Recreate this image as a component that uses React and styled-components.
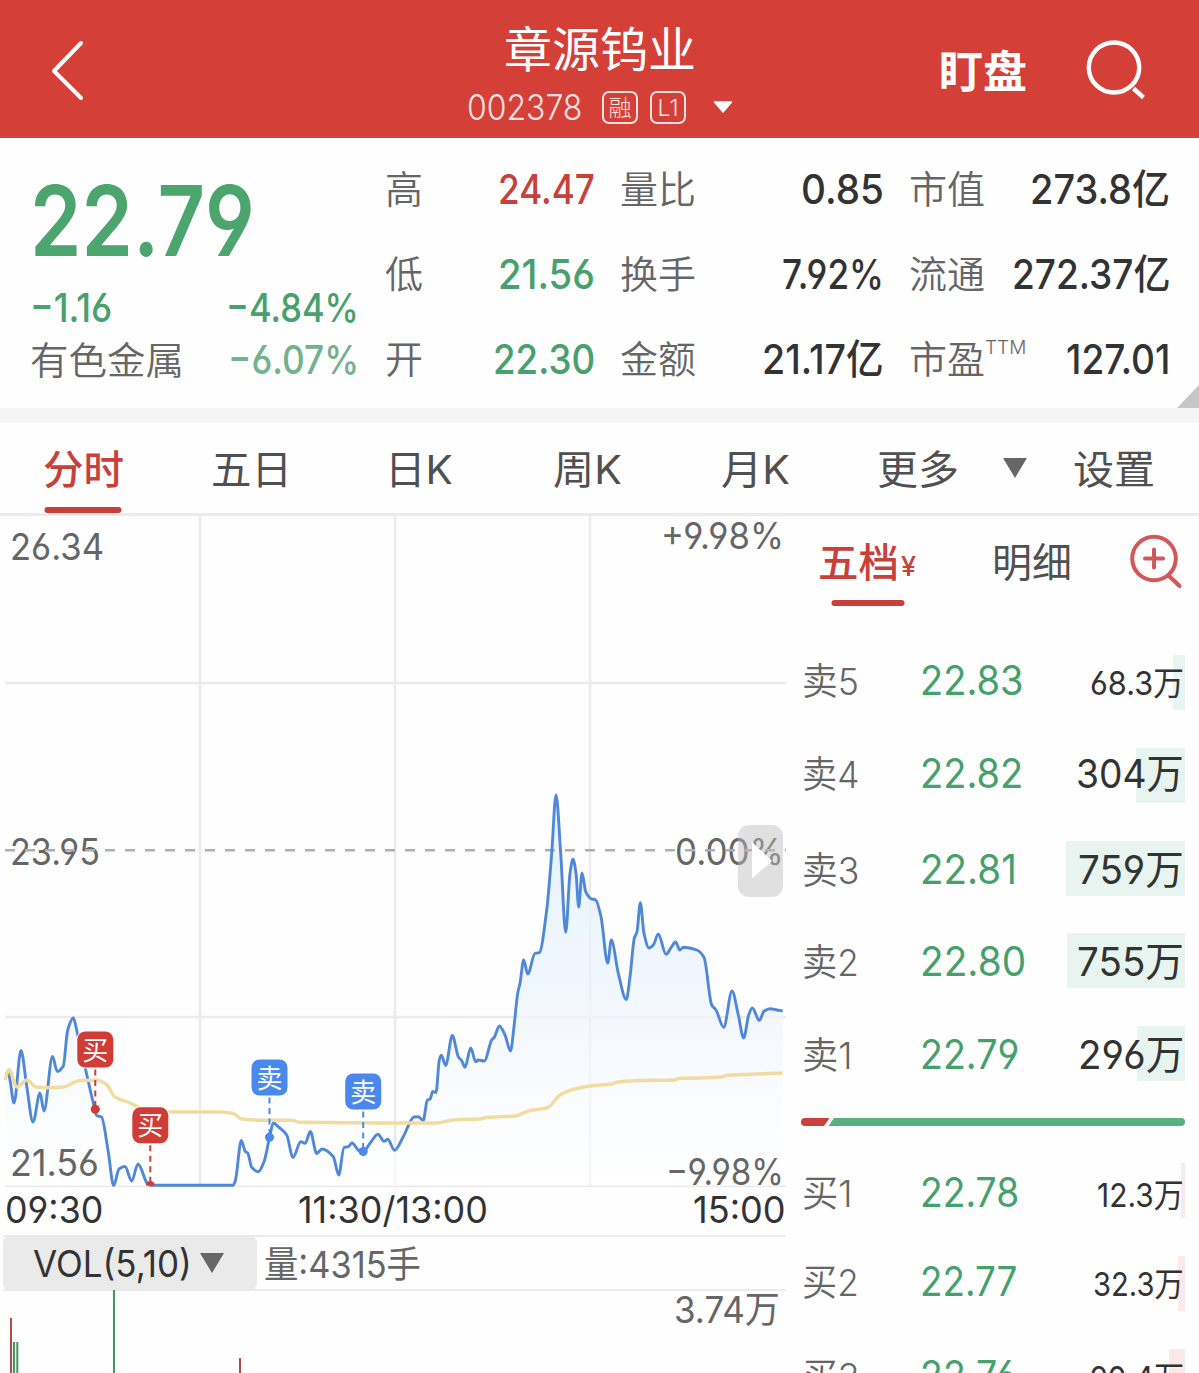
import React, { useLayoutEffect, useRef, useState } from "react";
import styled, { createGlobalStyle, css } from "styled-components";

const RED = "#c8403a";
const GREEN = "#48a06c";
const FONT = `Inter, "Noto Sans CJK SC", sans-serif`;

const STATS = [
    [
        { label: "高", value: "24.47", width: 97, color: RED },
        { label: "低", value: "21.56", width: 97, color: GREEN },
        { label: "开", value: "22.30", width: 102, color: GREEN },
    ],
    [
        { label: "量比", value: "0.85", width: 83 },
        { label: "换手", value: "7.92%", width: 102 },
        { label: "金额", value: "21.17亿", width: 122 },
    ],
    [
        { label: "市值", value: "273.8亿", width: 140 },
        { label: "流通", value: "272.37亿", width: 158 },
        { label: "市盈", sup: "TTM", value: "127.01", width: 104 },
    ],
];

const TABS = [
    { label: "分时", width: 81, active: true },
    { label: "五日", width: 81 },
    { label: "日K", width: 68 },
    { label: "周K", width: 69 },
    { label: "月K", width: 69 },
];

const SELLS = [
    { label: "卖5", price: "22.83", priceWidth: 104, volume: "68.3万", volumeWidth: 94, small: true, bar: 12, drop: 0 },
    { label: "卖4", price: "22.82", priceWidth: 103, volume: "304万", volumeWidth: 108, bar: 49, drop: 0 },
    { label: "卖3", price: "22.81", priceWidth: 97, volume: "759万", volumeWidth: 106, bar: 119, drop: 3 },
    { label: "卖2", price: "22.80", priceWidth: 106, volume: "755万", volumeWidth: 107, bar: 118, drop: 3 },
    { label: "卖1", price: "22.79", priceWidth: 99, volume: "296万", volumeWidth: 106, bar: 48, drop: 3 },
];

const BUYS = [
    { label: "买1", price: "22.78", priceWidth: 99, volume: "12.3万", volumeWidth: 87, small: true, bar: 4, drop: 4 },
    { label: "买2", price: "22.77", priceWidth: 97, volume: "32.3万", volumeWidth: 91, small: true, bar: 7, drop: 0 },
    { label: "买3", price: "22.76", priceWidth: 97, volume: "90.4万", volumeWidth: 94, small: true, bar: 16, drop: 1 },
];

const PRICE_LINE = [
    [6, 1074], [8, 1072], [10, 1080], [14, 1103], [21, 1050.5], [26.7, 1086], [33, 1122], [40, 1093], [44, 1111], [52.5, 1056.5],
    [57.3, 1071.5], [63.3, 1066], [67.7, 1030], [73.3, 1018], [77.3, 1033], [85.7, 1070], [95, 1110], [96.5, 1115.5],
    [101.5, 1117], [108, 1150], [113.7, 1185.5], [119, 1169], [125, 1166.5], [131.7, 1181], [138, 1164], [147, 1183],
    [150, 1185.3], [233, 1185.3], [235.3, 1181], [241.3, 1140.5], [245.3, 1151.5], [247.7, 1153], [251.7, 1167.3],
    [258.3, 1171.7], [264, 1161.7], [269.7, 1136.7], [273.3, 1123], [279.3, 1127.7], [286.7, 1135], [293, 1157.5],
    [300.7, 1141.7], [305.3, 1143.3], [310.3, 1131.5], [316.7, 1153.5], [322, 1149], [333.3, 1156.7], [338.7, 1175],
    [344, 1147.5], [348.3, 1146.7], [352, 1143], [359.3, 1151], [363.3, 1151.7], [370, 1143.3], [378, 1134.3],
    [384, 1141.3], [387.7, 1139.3], [394.5, 1150.3], [403.3, 1136.7], [414, 1117], [418, 1116.7], [423.3, 1120.5],
    [427.3, 1100], [430, 1099.3], [432.7, 1091.5], [436, 1092.5], [439.3, 1060], [441.3, 1055.3], [445.7, 1065.5],
    [452.3, 1035.5], [458.3, 1056.7], [461.7, 1060.7], [465, 1067.3], [470.7, 1048], [475.7, 1061.7], [478.3, 1060],
    [484.3, 1061], [491.7, 1040], [494.3, 1037.3], [499.3, 1026], [505, 1035], [510.5, 1051], [514, 1026.7],
    [517.7, 993.3], [520, 983.3], [523.7, 960], [527.7, 974], [535, 953.3], [539.3, 952.7], [546.7, 910],
    [551.7, 853.3], [556, 795], [560.7, 853.3], [565.7, 932.3], [570, 873.3], [573, 859.3], [576, 873.3], [578.7, 907],
    [582, 873], [585.7, 891.7], [591, 898.7], [595.7, 900], [601, 916.7], [607.7, 963.3], [611.3, 940], [618.3, 973.3],
    [626.3, 999.5], [630, 976.7], [634.3, 938.3], [637, 931.7], [640.3, 902.7], [644, 933.3], [649, 948], [653.3, 945],
    [658.3, 934], [666, 954.3], [671, 947.7], [675.7, 942], [679.7, 950], [683.3, 947.3], [696.7, 950], [704, 957.3],
    [711.7, 1005], [716, 1010], [723.7, 1027.3], [732, 991], [738.3, 1015], [743.7, 1038], [748.7, 1015], [752.3, 1008],
    [759.3, 1020.5], [764, 1011.3], [770, 1008.7], [776.7, 1010], [782.7, 1011],
];

const AVERAGE_LINE = [
    [5, 1080], [9, 1069.5], [17, 1087], [27, 1080], [36, 1087], [47, 1087.7], [63, 1087], [80, 1080.5], [97, 1080.3],
    [107, 1085], [115, 1097], [130, 1103], [140, 1108], [165, 1112], [220, 1112], [233, 1113.5], [242, 1119],
    [265, 1120.3], [292, 1120.3], [300, 1122.3], [380, 1123], [437, 1123], [450, 1120.5], [460, 1119.5], [480, 1119],
    [486, 1117.5], [515, 1116], [530, 1110.5], [547, 1108], [560, 1095], [572, 1089.7], [590, 1086], [612, 1084],
    [618, 1082], [640, 1080.5], [674, 1080], [680, 1078.3], [700, 1078], [722, 1077], [726, 1075.3], [782.7, 1073],
];

const TRADES = [
    { type: "买", color: "#d03c36", x: 95.3, top: 1031.5, end: 1109.3 },
    { type: "买", color: "#d03c36", x: 150.3, top: 1107.3, end: 1184 },
    { type: "卖", color: "#4a88ec", x: 269.5, top: 1059.5, end: 1137.3 },
    { type: "卖", color: "#4a88ec", x: 363.2, top: 1073.5, end: 1151.5 },
];

// Monotone cubic path, keeps the peaks where the data has them
function smoothPath(points) {
    const slopes = points.slice(1).map(([x, y], i) => (y - points[i][1]) / (x - points[i][0]));
    const tangents = points.map((_, i) => {
        const a = slopes[i - 1];
        const b = slopes[i];
        if (a === undefined) return b;
        if (b === undefined) return a;
        return a * b <= 0 ? 0 : (2 * a * b) / (a + b);
    });

    return points.reduce((d, [x, y], i) => {
        if (i === 0) return `M${x} ${y}`;
        const [px, py] = points[i - 1];
        const h = (x - px) / 3;
        return `${d}C${px + h} ${py + h * tangents[i - 1]} ${x - h} ${y - h * tangents[i]} ${x} ${y}`;
    }, "");
}

// Condenses a piece of text to the width of its slot
function Fit({ width, children, ...rest }) {
    const ref = useRef(null);
    const [scale, setScale] = useState(1);

    useLayoutEffect(() => {
        setScale(width / ref.current.offsetWidth);
    }, [width, children]);

    return (
        <Slot $width={width} {...rest}>
            <SlotText ref={ref} style={{ transform: `scaleX(${scale})` }}>{children}</SlotText>
        </Slot>
    );
}

function Header() {
    return (
        <HeaderBar>
            <BackIcon viewBox="0 0 40 64">
                <path d="M32 5 L5 33 L32 60" />
            </BackIcon>
            <Title>
                <StockName>章源钨业</StockName>
                <StockMeta>
                    <Fit width={115}>002378</Fit>
                    <Badge>融</Badge>
                    <Badge>L1</Badge>
                    <HeaderCaret viewBox="0 0 20 12">
                        <path d="M1.5 1 H18.5 L10 11 Z" />
                    </HeaderCaret>
                </StockMeta>
            </Title>
            <Watch>盯盘</Watch>
            <SearchIcon viewBox="0 0 64 64">
                <ellipse cx="29" cy="29.5" rx="25.2" ry="25" />
                <path d="M48.5 50.5 L58.5 59.5" />
            </SearchIcon>
        </HeaderBar>
    );
}

function Quote() {
    return (
        <QuotePanel>
            <PriceBlock>
                <LastPrice>
                    <Fit width={225}>22.79</Fit>
                </LastPrice>
                <ChangeRow>
                    <Fit width={82}>−1.16</Fit>
                    <Fit width={133}>−4.84%</Fit>
                </ChangeRow>
                <ChangeRow $faded>
                    <Label>
                        <Fit width={154}>有色金属</Fit>
                    </Label>
                    <Fit width={131}>−6.07%</Fit>
                </ChangeRow>
            </PriceBlock>
            {STATS.map((column, i) => (
                <StatColumn key={i}>
                    {column.map(({ label, sup, value, width, color }) => (
                        <Stat key={label}>
                            <Label>{label}{sup && <Sup>{sup}</Sup>}</Label>
                            <StatValue $color={color}>
                                <Fit width={width}>{value}</Fit>
                            </StatValue>
                        </Stat>
                    ))}
                </StatColumn>
            ))}
            <Corner viewBox="0 0 22 23">
                <path d="M22 0 V23 H0 Z" />
            </Corner>
        </QuotePanel>
    );
}

function PeriodTabs() {
    return (
        <TabBar>
            {TABS.map(({ label, width, active }) => (
                <Tab key={label} $active={active}>
                    <Fit width={width}>{label}</Fit>
                </Tab>
            ))}
            <MoreTab>
                <Fit width={82}>更多</Fit>
            </MoreTab>
            <Caret viewBox="0 0 24 20">
                <path d="M0 0 H24 L12 20 Z" />
            </Caret>
            <SettingsTab>
                <Fit width={82}>设置</Fit>
            </SettingsTab>
        </TabBar>
    );
}

function TrendChart() {
    const line = smoothPath(PRICE_LINE);

    return (
        <Chart viewBox="0 516 788 671">
            <defs>
                <linearGradient id="area" gradientUnits="userSpaceOnUse" x1="0" y1="795" x2="0" y2="1186">
                    <stop offset="0" stopColor="#e0f0fe" stopOpacity="0.85" />
                    <stop offset="0.5" stopColor="#edf4fd" stopOpacity="0.75" />
                    <stop offset="1" stopColor="#ffffff" stopOpacity="0.6" />
                </linearGradient>
            </defs>
            <g stroke="#ebebeb" strokeWidth="2.5">
                <path d="M200 516 V1186 M395 516 V1186 M590 516 V1186" />
                <path d="M5 683 H786 M5 1017 H786" />
                <path d="M5 1186 H786" strokeWidth="2" />
            </g>
            <path d={`${line}V1186H6Z`} fill="url(#area)" />
            <g fill="#666">
                <AxisText x="10" y="559.5" textLength="94">26.34</AxisText>
                <AxisText x="10" y="864.5" textLength="90">23.95</AxisText>
                <AxisText x="10" y="1175.5" textLength="89">21.56</AxisText>
                <AxisText x="661" y="549" textLength="123">+9.98%</AxisText>
                <AxisText x="675" y="864.5" textLength="109">0.00%</AxisText>
                <AxisText x="666" y="1185" textLength="118">−9.98%</AxisText>
            </g>
            <path d="M5 850.3 H786" stroke="#adadad" strokeWidth="2.4" strokeDasharray="10 10" />
            <path d={line} fill="none" stroke="#5088d8" strokeWidth="2.9" strokeLinejoin="round" />
            <path d={smoothPath(AVERAGE_LINE)} fill="none" stroke="#f1dc9f" strokeWidth="3.5" />
            {TRADES.map(({ type, color, x, top, end }) => (
                <g key={x}>
                    <path d={`M${x} ${top + 38} V${end}`} stroke={color} strokeWidth="2" strokeDasharray="6 4.5" />
                    <path d={end > 1180 ? `M${x - 4.5} 1185.5 a4.5 4.5 0 0 1 9 0 Z` : `M${x - 4.5} ${end} a4.5 4.5 0 1 0 9 0 a4.5 4.5 0 1 0 -9 0`} fill={color} />
                    <rect x={x - 19} y={top - 1} width="38" height="38" rx="9" fill="#fff" />
                    <rect x={x - 18} y={top} width="36" height="36" rx="8" fill={color} />
                    <TradeText x={x} y={top + 28}>{type}</TradeText>
                </g>
            ))}
            <rect x="738" y="825" width="45" height="72" rx="11" fill="#bdbdbd" fillOpacity="0.45" />
            <path d="M752 842 L772 861 L752 878.5 Z" fill="#fff" />
        </Chart>
    );
}

function OrderRow({ label, price, priceWidth, volume, volumeWidth, small, bar, side, drop }) {
    return (
        <Order $drop={drop}>
            <DepthBar $width={bar} $side={side} />
            <OrderLabel>
                <Fit width={label.endsWith("1") ? 51 : 57}>{label}</Fit>
            </OrderLabel>
            <OrderPrice>
                <Fit width={priceWidth}>{price}</Fit>
            </OrderPrice>
            <OrderVolume $small={small}>
                <Fit width={volumeWidth}>{volume}</Fit>
            </OrderVolume>
        </Order>
    );
}

function OrderBook() {
    return (
        <Book>
            <BookTabs>
                <BookTab $active>
                    <Fit width={81}>五档</Fit>
                    <Yen>¥</Yen>
                </BookTab>
                <BookTab>明细</BookTab>
                <ZoomIcon viewBox="0 0 54 56">
                    <circle cx="25" cy="25.5" r="21.8" />
                    <path d="M39.5 42.5 L50.5 53 M16 25.5 H34 M25 16.5 V34.5" />
                </ZoomIcon>
            </BookTabs>
            {SELLS.map((order) => <OrderRow key={order.label} side="sell" {...order} />)}
            <Ratio viewBox="0 0 384 8">
                <path d="M4 0 H28.5 L23 8 H4 A4 4 0 0 1 4 0 Z" fill="#cb423c" />
                <path d="M33 0 H380 A4 4 0 0 1 380 8 H27.5 Z" fill="#59b07f" />
            </Ratio>
            {BUYS.map((order) => <OrderRow key={order.label} side="buy" {...order} />)}
        </Book>
    );
}

function App() {
    return (
        <>
            <GlobalStyle />
            <Page>
                <Header />
                <Quote />
                <PeriodTabs />
                <Content>
                    <ChartColumn>
                        <TrendChart />
                        <TimeAxis>
                            <Fit width={98}>09:30</Fit>
                            <MidTime>
                                <Fit width={190}>11:30/13:00</Fit>
                            </MidTime>
                            <Fit width={93}>15:00</Fit>
                        </TimeAxis>
                        <VolumeHeader>
                            <VolumePicker>
                                <Fit width={159}>VOL(5,10)</Fit>
                                <Caret viewBox="0 0 24 20">
                                    <path d="M0 0 H24 L12 20 Z" />
                                </Caret>
                            </VolumePicker>
                            <Fit width={157}>量:4315手</Fit>
                        </VolumeHeader>
                        <VolumeArea>
                            <VolumeBars viewBox="0 0 400 83">
                                <path d="M11 28 V83 M240 68 V83" stroke="#b04a45" />
                                <path d="M14 52 V83 M17.3 52 V83 M114 0 V83" stroke="#469562" />
                            </VolumeBars>
                            <Fit width={106}>3.74万</Fit>
                        </VolumeArea>
                    </ChartColumn>
                    <OrderBook />
                </Content>
            </Page>
        </>
    );
}

const GlobalStyle = createGlobalStyle`
    body {
        margin: 0;
        overflow: hidden;
        background: #fff;
    }

    * {
        box-sizing: border-box;
    }
`;

const Page = styled.div`
    width: 1199px;
    height: 1373px;
    overflow: hidden;
    background: #fefefe;
    font-family: ${FONT};
    font-feature-settings: "cv03", "cv04";
    color: #333;
`;

const Slot = styled.span`
    display: block;
    flex: none;
    width: ${({ $width }) => $width}px;
    white-space: nowrap;
`;

const SlotText = styled.span`
    display: inline-block;
    vertical-align: top;
    transform-origin: 0 50%;
`;

const HeaderBar = styled.header`
    height: 138px;
    display: flex;
    background: #d44038;
    color: #fff;
`;

const BackIcon = styled.svg`
    width: 40px;
    height: 64px;
    margin: 38px 0 0 49px;
    fill: none;
    stroke: #fff;
    stroke-width: 4;
    stroke-linecap: round;
    stroke-linejoin: round;
`;

const Title = styled.div`
    width: 270px;
    margin-left: 378px;
    padding-top: 19px;
`;

const StockName = styled.h1`
    margin: 0 0 0 37px;
    font-size: 48px;
    font-weight: 400;
    line-height: 62px;
    white-space: nowrap;
`;

const StockMeta = styled.div`
    height: 52px;
    display: flex;
    align-items: center;
    color: #fbe3e1;
    font-size: 35px;
    font-weight: 300;
    line-height: 52px;
`;

const Badge = styled.span`
    width: 36px;
    height: 33px;
    margin-left: 20px;
    border: 2px solid #fbe3e1;
    border-radius: 7px;
    font-size: 23px;
    line-height: 30px;
    text-align: center;

    & + & {
        margin-left: 12px;
    }
`;

const HeaderCaret = styled.svg`
    width: 20px;
    height: 12px;
    margin-left: 27px;
    fill: #fff;
    stroke: #fff;
    stroke-width: 1.5;
    stroke-linejoin: round;
`;

const Watch = styled.div`
    margin-left: 202px;
    width: 90px;
    font-size: 44px;
    font-weight: 700;
    line-height: 144px;
    white-space: nowrap;
`;

const SearchIcon = styled.svg`
    width: 64px;
    height: 64px;
    margin: 38px 0 0 56px;
    fill: none;
    stroke: #fff;
    stroke-width: 4.4;
`;

const QuotePanel = styled.section`
    position: relative;
    height: 285px;
    display: flex;
    border-bottom: 15px solid #f5f5f5;
`;

const PriceBlock = styled.div`
    width: 357px;
    padding: 32px 0 0 30px;
`;

const LastPrice = styled.div`
    color: #4ca46f;
    height: 112px;
    font-size: 98px;
    font-weight: 600;
    line-height: 101px;
`;

const ChangeRow = styled.div`
    height: 52px;
    display: flex;
    justify-content: space-between;
    color: ${({ $faded }) => ($faded ? "#74b18f" : GREEN)};
    font-size: 40px;
    font-weight: 500;
    line-height: 52px;
    margin-right: -2px;
`;

const Label = styled.span`
    color: #666;
    font-size: 38px;
    font-weight: 350;
    white-space: nowrap;
`;

const Sup = styled.span`
    position: relative;
    top: -19px;
    font-size: 19px;
`;

const StatColumn = styled.div`
    width: 207px;
    margin-left: 28px;
    padding-top: 9px;

    & + & {
        width: 261px;
    }

    & + & + & {
        width: 258px;
    }
`;

const Stat = styled.div`
    height: 85px;
    display: flex;
    justify-content: space-between;
    line-height: 85px;
`;

const StatValue = styled.div`
    margin-right: -3px;
    color: ${({ $color }) => $color || "#333"};
    font-size: 41px;
    font-weight: 550;
`;

const Corner = styled.svg`
    position: absolute;
    right: 0;
    bottom: 0;
    width: 22px;
    height: 23px;
    fill: #c6c6c6;
`;

const TabBar = styled.nav`
    height: 93px;
    display: flex;
    border-bottom: 3px solid #ebebeb;
    color: #505050;
    font-size: 40px;
    line-height: 94px;
`;

const Underline = css`
    &::after {
        content: "";
        position: absolute;
        left: 50%;
        bottom: 0;
        width: 77px;
        height: 6px;
        border-radius: 3px;
        background: ${RED};
        transform: translateX(-50%);
    }
`;

const Tab = styled.div`
    position: relative;
    left: -1px;
    width: 168px;
    display: flex;
    justify-content: center;
    ${({ $active }) => $active && css`
        color: ${RED};
        font-weight: 500;
        ${Underline}
    `}
`;

const MoreTab = styled.div`
    width: 126px;
    margin-left: 37px;
`;

const Caret = styled.svg`
    width: 24px;
    height: 20px;
    fill: #666;
    align-self: center;
`;

const SettingsTab = styled.div`
    margin-left: 46px;
`;

const Content = styled.main`
    display: flex;
`;

const ChartColumn = styled.div`
    width: 788px;
`;

const Chart = styled.svg`
    display: block;
    width: 788px;
    height: 671px;
`;

const AxisText = styled.text.attrs({ lengthAdjust: "spacingAndGlyphs" })`
    font-size: 36.5px;
`;

const TradeText = styled.text`
    fill: #fff;
    font-size: 26px;
    text-anchor: middle;
`;

const TimeAxis = styled.div`
    height: 48px;
    display: flex;
    justify-content: space-between;
    padding: 0 2px 0 5px;
    font-size: 36.5px;
    line-height: 46px;
`;

const MidTime = styled.div`
    margin: 0 5px 0 -5px;
`;

const VolumeHeader = styled.div`
    height: 56px;
    display: flex;
    width: 783px;
    margin-left: 3px;
    border: solid #ebebeb;
    border-width: 2px 0;
    color: #666;
    font-size: 37px;
    line-height: 56px;
`;

const VolumePicker = styled.div`
    width: 254px;
    height: 56px;
    display: flex;
    gap: 8px;
    margin: -2px 7px -2px 0;
    padding-left: 30px;
    border-radius: 8px;
    background: #eaeaea;
    color: #333;
    line-height: 58px;
`;

const VolumeArea = styled.div`
    display: flex;
    color: #666;
    font-size: 37px;
    line-height: 38px;
`;

const VolumeBars = styled.svg`
    width: 400px;
    height: 83px;
    margin: -1px 274px 0 0;
    fill: none;
    stroke-width: 2;
`;

const Book = styled.aside`
    width: 384px;
    margin-left: 13px;
`;

const BookTabs = styled.div`
    height: 90px;
    display: flex;
    margin-bottom: 30px;
    padding-left: 17px;
    line-height: 94px;
    font-size: 40px;
    color: #505050;
`;

const BookTab = styled.div`
    position: relative;
    display: flex;
    width: ${({ $active }) => ($active ? 100 : 80)}px;
    margin-right: ${({ $active }) => ($active ? 74 : 57)}px;
    white-space: nowrap;
    ${({ $active }) => $active && css`
        color: ${RED};
        font-weight: 500;
        ${Underline}

        &::after {
            width: 73px;
        }
    `}
`;

const Yen = styled.span`
    margin-left: 2px;
    font-size: 27px;
    line-height: 101px;
`;

const ZoomIcon = styled.svg`
    flex: none;
    width: 54px;
    height: 56px;
    margin-top: 17px;
    fill: none;
    stroke: #d2575a;
    stroke-width: 4;
    stroke-linecap: round;
`;

const Order = styled.div`
    position: relative;
    height: 92.8px;
    display: flex;
    padding-top: ${({ $drop }) => $drop}px;
    line-height: 88px;
    z-index: 0;
`;

const DepthBar = styled.div`
    position: absolute;
    z-index: -1;
    right: 0;
    top: 19px;
    width: ${({ $width }) => $width}px;
    height: 55px;
    background: ${({ $side }) => ($side === "sell" ? "#e8f4f0" : "#f9eae9")};
`;

const OrderLabel = styled.div`
    width: 119px;
    padding-left: 1px;
    color: #666;
    font-size: 37px;
    font-weight: 350;
    line-height: 91px;
`;

const OrderPrice = styled.div`
    flex: 1;
    color: #46a06c;
    font-size: 41px;
`;

const OrderVolume = styled.div`
    margin-right: 1px;
    font-size: ${({ $small }) => ($small ? 33 : 40)}px;
    line-height: ${({ $small }) => ($small ? 94 : 89)}px;
`;

const Ratio = styled.svg`
    display: block;
    width: 384px;
    height: 8px;
    margin: 18px 0;
`;

export default App;
